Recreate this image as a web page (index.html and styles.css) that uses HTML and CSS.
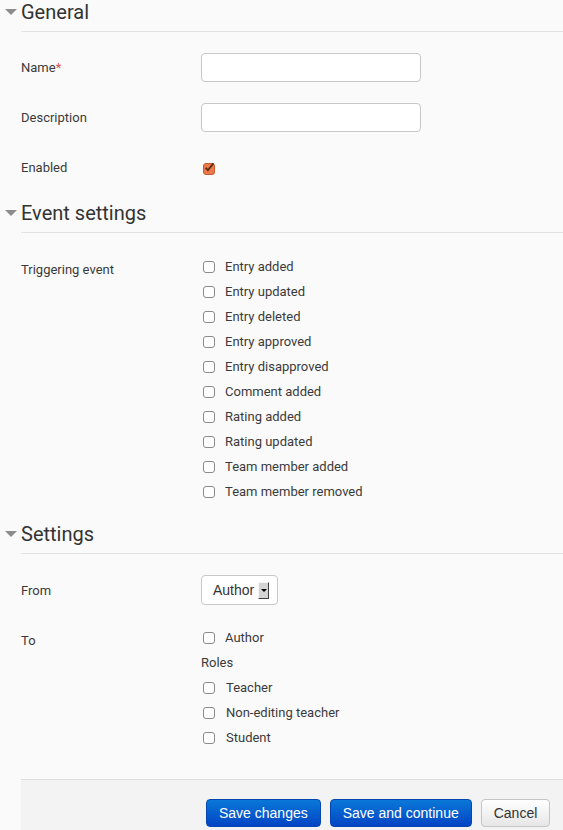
FILE: index.html
```html
<!DOCTYPE html>
<html lang="en">
<head>
    <meta charset="UTF-8">
    <meta name="viewport" content="width=device-width, initial-scale=1.0">
    <title>Notification rule</title>
    <link rel="stylesheet" href="styles.css">
</head>
<body>
    <form class="mform">
        <!-- General -->
        <div class="section first">
            <div class="section-head">
                <span class="toggle"></span>
                <h2>General</h2>
            </div>
            <div class="fitem">
                <label class="flabel">Name<span class="req">*</span></label>
                <div class="felement"><input type="text" class="text-input"></div>
            </div>
            <div class="fitem">
                <label class="flabel">Description</label>
                <div class="felement"><input type="text" class="text-input"></div>
            </div>
            <div class="fitem">
                <label class="flabel">Enabled</label>
                <div class="felement">
                    <span class="cb checked">
                        <svg width="12" height="12" viewBox="0 0 12 12"><path d="M2.6 5.8 L4.9 8.2 L10.4 1.4" fill="none" stroke="#5a2a14" stroke-width="1.8"/></svg>
                    </span>
                </div>
            </div>
        </div>

        <!-- Event settings -->
        <div class="section">
            <div class="section-head">
                <span class="toggle"></span>
                <h2>Event settings</h2>
            </div>
            <div class="fitem list-row">
                <label class="flabel">Triggering event</label>
                <div class="felement checklist">
                    <div class="check-item"><span class="cb"></span>Entry added</div>
                    <div class="check-item"><span class="cb"></span>Entry updated</div>
                    <div class="check-item"><span class="cb"></span>Entry deleted</div>
                    <div class="check-item"><span class="cb"></span>Entry approved</div>
                    <div class="check-item"><span class="cb"></span>Entry disapproved</div>
                    <div class="check-item"><span class="cb"></span>Comment added</div>
                    <div class="check-item"><span class="cb"></span>Rating added</div>
                    <div class="check-item"><span class="cb"></span>Rating updated</div>
                    <div class="check-item"><span class="cb"></span>Team member added</div>
                    <div class="check-item"><span class="cb"></span>Team member removed</div>
                </div>
            </div>
        </div>

        <!-- Settings -->
        <div class="section last">
            <div class="section-head">
                <span class="toggle"></span>
                <h2>Settings</h2>
            </div>
            <div class="fitem">
                <label class="flabel">From</label>
                <div class="felement">
                    <div class="select">Author<span class="select-arrow"></span></div>
                </div>
            </div>
            <div class="fitem list-row to-row">
                <label class="flabel">To</label>
                <div class="felement checklist">
                    <div class="check-item"><span class="cb"></span>Author</div>
                    <div class="check-item group-title">Roles</div>
                    <div class="check-item indent"><span class="cb"></span>Teacher</div>
                    <div class="check-item indent"><span class="cb"></span>Non-editing teacher</div>
                    <div class="check-item indent"><span class="cb"></span>Student</div>
                </div>
            </div>
        </div>

        <div class="actions">
            <button type="button" class="btn btn-primary">Save changes</button>
            <button type="button" class="btn btn-primary">Save and continue</button>
            <button type="button" class="btn">Cancel</button>
        </div>
    </form>
</body>
</html>
```

FILE: styles.css
```css
body {
    margin: 0;
    background-color: #fafafa;
    font-family: Roboto, 'Liberation Sans', sans-serif;
    font-size: 13px;
    color: #3a3a3a;
}
.mform {
    width: 563px;
}
.section {
    padding-bottom: 18px;
}
.section.first {
    padding-bottom: 19px;
}
.section.last {
    padding-bottom: 29px;
}
.section-head {
    display: flex;
    align-items: center;
}
.toggle {
    width: 21px;
    height: 31px;
    display: flex;
    align-items: center;
    box-sizing: border-box;
    padding-left: 5px;
    margin-top: -9px;
}
.toggle::before {
    content: '';
    border-left: 6px solid transparent;
    border-right: 6px solid transparent;
    border-top: 6px solid #8c8c8c;
}
.section-head h2 {
    flex: 1;
    margin: 0;
    height: 31px;
    line-height: 24px;
    font-size: 20px;
    font-weight: normal;
    color: #333;
    border-bottom: 1px solid #e3e3e3;
}
.fitem {
    display: flex;
    align-items: center;
    margin-top: 21px;
    padding-left: 21px;
}
.fitem.to-row {
    margin-top: 20px;
}
.flabel {
    width: 180px;
    line-height: 29px;
}
.req {
    color: #d9534f;
}
.text-input {
    box-sizing: border-box;
    width: 220px;
    height: 29px;
    border: 1px solid #c8c8c8;
    border-radius: 4px;
    background: #fff;
    margin: 0;
}
.cb {
    display: inline-block;
    box-sizing: border-box;
    width: 12px;
    height: 12px;
    border: 1px solid #8a8a8a;
    border-radius: 3px;
    background: #fff;
    margin-left: 2px;
    margin-right: 10px;
    vertical-align: middle;
}
.cb.checked {
    background: #ea7a4c;
    border-color: #c9582a;
}
.cb.checked svg {
    display: block;
    margin: -2px 0 0 -1px;
}
.list-row {
    align-items: flex-start;
}
.list-row .flabel {
    line-height: 18px;
    padding-top: 7px;
}
.check-item {
    display: flex;
    align-items: center;
    height: 25px;
}
.check-item.indent .cb {
    margin-right: 11px;
}
.select {
    box-sizing: border-box;
    width: 77px;
    height: 30px;
    border: 1px solid #c8c8c8;
    border-radius: 4px;
    background: #fff;
    display: flex;
    align-items: center;
    padding-left: 11px;
    font-family: 'Liberation Sans', Arial, sans-serif;
    font-size: 14px;
    color: #333;
}
.select-arrow {
    margin-left: 4px;
    width: 11px;
    height: 17px;
    box-sizing: border-box;
    background: #d4d4d4;
    border-top: 1px solid #f4f4f4;
    border-left: 1px solid #f4f4f4;
    border-right: 1px solid #404040;
    border-bottom: 1px solid #404040;
    display: flex;
    align-items: center;
    justify-content: center;
}
.select-arrow::before {
    content: '';
    border-left: 3px solid transparent;
    border-right: 3px solid transparent;
    border-top: 3px solid #000;
}
.actions {
    margin-left: 21px;
    background: #f3f3f3;
    border-top: 1px solid #dedede;
    padding: 19px 0 6px 185px;
    display: flex;
    gap: 9px;
}
.btn {
    box-sizing: border-box;
    height: 28px;
    padding: 0 12px;
    border: 1px solid #c5c5c5;
    border-radius: 4px;
    background: linear-gradient(#ffffff, #e6e6e6);
    font-family: 'Liberation Sans', Arial, sans-serif;
    font-size: 14px;
    color: #333;
    cursor: pointer;
}
.btn-primary {
    border-color: #0646b0;
    background: linear-gradient(#0a78d8, #0244c4);
    color: #fff;
}
```
